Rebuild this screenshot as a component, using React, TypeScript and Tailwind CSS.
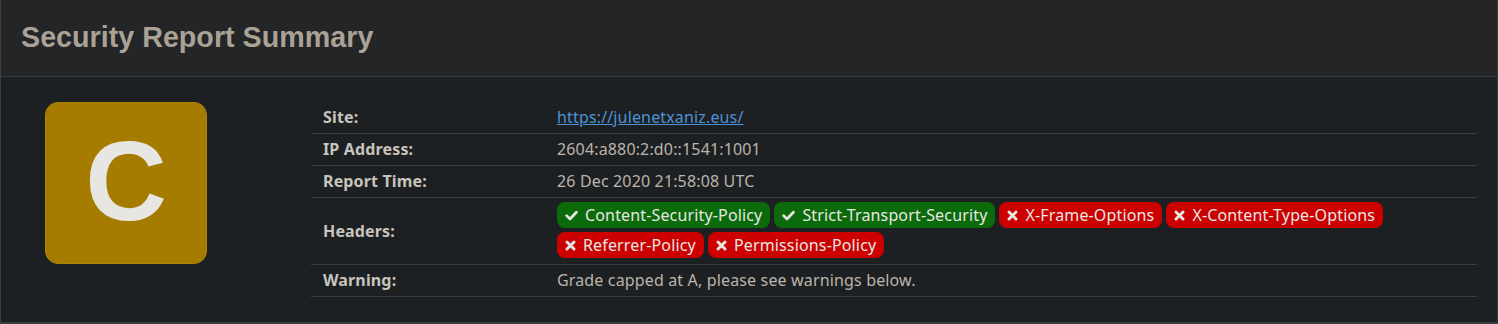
import React from "react";

const Check = () => (
  <svg width="13" height="11" viewBox="0 0 13 11" className="shrink-0">
    <path d="M1.6 5.6 L5 9 L11.4 2.2" stroke="currentColor" strokeWidth="2.7" fill="none" strokeLinecap="round" strokeLinejoin="round" />
  </svg>
);

const Cross = () => (
  <svg width="11" height="11" viewBox="0 0 11 11" className="shrink-0">
    <path d="M2 2 L9 9 M9 2 L2 9" stroke="currentColor" strokeWidth="2.9" strokeLinecap="round" />
  </svg>
);

const Badge = ({ ok, label }: { ok: boolean; label: string }) => (
  <span
    className={`inline-flex items-center h-[26px] pl-2 pr-2 rounded-[8px] gap-[7px] text-[16px] leading-none text-[#e8e6e3] ${
      ok ? "bg-[#0b6b0b]" : "bg-[#cc0000]"
    }`}
  >
    {ok ? <Check /> : <Cross />}
    <span>{label}</span>
  </span>
);

const Row = ({ label, children, tall }: { label: string; children: React.ReactNode; tall?: boolean }) => (
  <div className="flex items-center border-b border-[#3a3e41]">
    <div className={`w-[234px] pl-3 font-bold text-[#c8c3bc] ${tall ? "" : "py-[5px]"} leading-[21px]`}>{label}</div>
    <div className={`flex-1 pl-3 text-[#bbb4ab] leading-[21px] ${tall ? "pt-[4px] pb-[6px]" : "py-[5px]"}`}>{children}</div>
  </div>
);

export default function App() {
  return (
    <div className="w-[1498px] h-[324px] bg-[#3a3e41]" style={{ fontFamily: "'Noto Sans', 'Open Sans', sans-serif" }}>
      <div className="h-[323px] bg-[#1d2022] border-x border-b border-[#3a3e41] flex flex-col">
        <div className="h-[77px] bg-[#232527] border-b border-[#3a3e41] flex items-center pl-[20px]">
          <h1
            className="text-[28.7px] font-bold text-[#aaa295] leading-none pb-[1px]"
            style={{ fontFamily: "'Liberation Sans', Arial, sans-serif" }}
          >
            Security Report Summary
          </h1>
        </div>
        <div className="flex flex-1">
          <div className="w-[310px] pl-[44px] pt-[25px]">
            <div
              className="w-[162px] h-[162px] rounded-[13px] bg-[#a57c00] border border-[#b08400] flex items-center justify-center text-[#e8e6e3] text-[113px] font-bold leading-none"
              style={{ fontFamily: "'Liberation Sans', Arial, sans-serif" }}
            >
              <span className="pb-[4px]">C</span>
            </div>
          </div>
          <div className="w-[1166px] pt-[25px] text-[16px] tracking-[0.15px]">
            <Row label="Site:">
              <a href="#" className="text-[#4c93d6] underline">https://julenetxaniz.eus/</a>
            </Row>
            <Row label="IP Address:">2604:a880:2:d0::1541:1001</Row>
            <Row label="Report Time:">26 Dec 2020 21:58:08 UTC</Row>
            <Row label="Headers:" tall>
              <div className="flex flex-wrap gap-x-[4px] gap-y-[4px]">
                <Badge ok label="Content-Security-Policy" />
                <Badge ok label="Strict-Transport-Security" />
                <Badge ok={false} label="X-Frame-Options" />
                <Badge ok={false} label="X-Content-Type-Options" />
                <Badge ok={false} label="Referrer-Policy" />
                <Badge ok={false} label="Permissions-Policy" />
              </div>
            </Row>
            <Row label="Warning:">Grade capped at A, please see warnings below.</Row>
          </div>
        </div>
      </div>
    </div>
  );
}
